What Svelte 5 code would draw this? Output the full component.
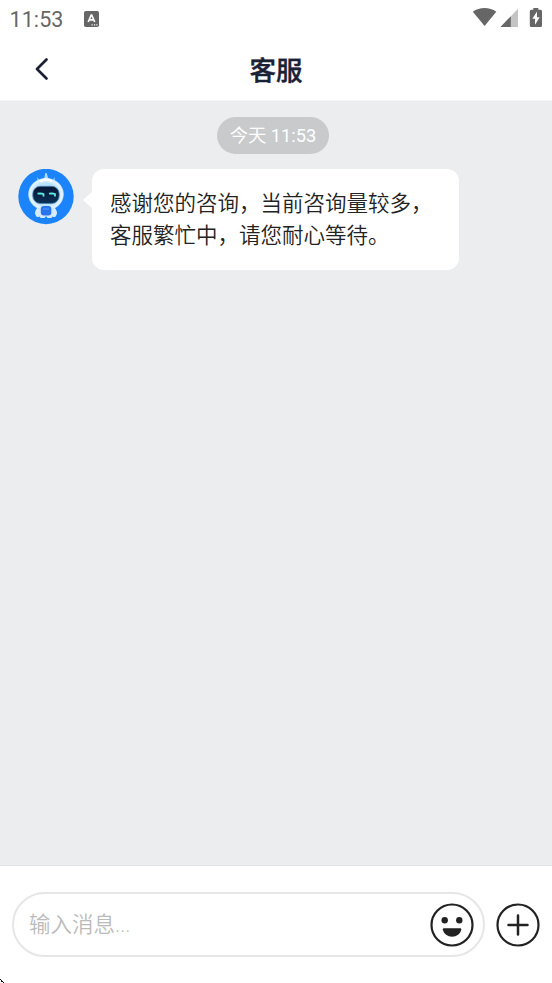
<script>
  const title = '客服';
  const time = '11:53';
  const lines = ['感谢您的咨询，当前咨询量较多，', '客服繁忙中，请您耐心等待。'];
  let draft = $state('');
</script>

<div class="screen">
  <div class="status">
    <span class="clock">{time}</span>
    <svg class="app" width="15" height="16" viewBox="0 0 15 16">
      <rect width="15" height="16" rx="1.8" fill="#666" />
      <path d="M4.2 11 7.2 4h.5l3 7M5.4 8.8h4.1" fill="none" stroke="#fff" stroke-width="1.7" />
      <path d="M7.5 13.8h1.2M10 13.8h1.2M12.3 13.8h1.2" stroke="#fff" stroke-width="1.2" />
    </svg>
    <svg class="signals" width="72" height="22" viewBox="0 0 72 22">
      <path d="M.8 4.7C7.4-.2 17.700-.2 24.300 4.700L12.600 19Z" fill="#666" />
      <path d="M46 1.800V20H28.500Z" fill="#c4c4c4" />
      <path d="M38.800 9.200V20H28.500Z" fill="#666" />
      <path d="M61.300 1h5v1.700h2.200q1.500 0 1.500 1.500v14.300q0 1.500-1.500 1.500h-9.200q-1.500 0-1.500-1.500V4.200q0-1.500 1.500-1.500h2Z" fill="#666" />
      <path d="M65 4.500 60.300 11.800h2.700v6L67.700 10.200H65Z" fill="#fff" />
    </svg>
  </div>

  <header>
    <button class="back" aria-label="返回">
      <svg width="16" height="24" viewBox="0 0 16 24">
        <path d="M12.500 2.500 3 12l9.500 9.500" fill="none" stroke="#1b2134" stroke-width="2.700" stroke-linecap="round" stroke-linejoin="round" />
      </svg>
    </button>
    <h1>{title}</h1>
  </header>

  <main>
    <div class="date">今天 {time}</div>
    <div class="message">
      <svg class="avatar" width="56" height="56" viewBox="0 0 56 56">
        <defs>
          <radialGradient id="shell" cx=".5" cy=".5" r=".52">
            <stop offset=".65" stop-color="#b9e2fb" />
            <stop offset=".88" stop-color="#e8f6ff" />
            <stop offset="1" stop-color="#8bc7ff" />
          </radialGradient>
          <linearGradient id="visor" x1="0" y1="0" x2="0" y2="1">
            <stop offset="0" stop-color="#071633" />
            <stop offset="1" stop-color="#0b3158" />
          </linearGradient>
        </defs>
        <circle cx="28" cy="27.500" r="27.700" fill="#1c84fb" />
        <path d="M27.400 4h1.300l2.500 9h-6ZM19.200 8l2.500 4-2 1.500ZM36.800 8l-2.500 4 2 1.500Z" fill="#a9daff" />
        <ellipse cx="28" cy="25.200" rx="17.800" ry="16.200" fill="url(#shell)" />
        <path d="M22 12.500q6-4 12 0" fill="none" stroke="#fff" stroke-width="2.500" />
        <rect x="14.800" y="17.300" width="26.400" height="17.200" rx="7.500" fill="url(#visor)" stroke="#4d87b7" stroke-width=".8" />
        <path d="M19.500 24.700q4-.5 6 .3v2.500M31 24.700q4-.5 6 .3v2.500" fill="none" stroke="#5feae3" stroke-width="1.800" />
        <path d="M20 38q-5 5-1.700 9.500 3.500 1.500 5-1.500M36 38q5 5 1.700 9.500-3.500 1.500-5-1.500" fill="#d8ecff" />
        <path d="M22 37h12l2 6-2.500 6h-4l-1.500-2-1.500 2h-4L20 43Z" fill="#d3e9ff" />
        <rect x="22.800" y="37" width="10.500" height="9.500" rx="3" fill="#2874ee" />
        <path d="M25 40h6" stroke="#3f8cf7" stroke-width="1.500" />
      </svg>
      <div class="bubble">
        {#each lines as line}
          <div>{line}</div>
        {/each}
      </div>
    </div>
  </main>

  <footer>
    <div class="field">
      <input bind:value={draft} placeholder="输入消息..." />
      <button aria-label="表情">
        <svg width="44" height="44" viewBox="0 0 44 44">
          <circle cx="22" cy="22" r="20.500" fill="none" stroke="#222" stroke-width="2.200" />
          <circle cx="14.700" cy="17.200" r="3.200" fill="#222" />
          <circle cx="29.300" cy="17.200" r="3.200" fill="#222" />
          <path d="M14 25.300H30.200Q31.500 25.300 31.300 26.500C30.500 30.800 26.500 33.700 22.100 33.700S13.700 30.800 12.800 26.500Q12.700 25.300 14 25.300Z" fill="#222" />
        </svg>
      </button>
    </div>
    <button aria-label="更多">
      <svg width="44" height="44" viewBox="0 0 44 44">
        <circle cx="22" cy="22" r="20.500" fill="none" stroke="#222" stroke-width="2.200" />
        <path d="M12.500 22h19M22 12.500v19" stroke="#222" stroke-width="2.500" stroke-linecap="round" />
      </svg>
    </button>
    <svg class="corner" width="4" height="4" viewBox="0 0 4 4" shape-rendering="crispEdges">
      <path d="M0 0h1v1H0ZM1 1h1v1H1ZM2 2h1v1H2ZM1 2h1v1H1ZM3 3h1v1H3Z" fill="#111" />
    </svg>
  </footer>
</div>

<style>
  .screen {
    box-sizing: border-box;
    width: 552px;
    height: 983px;
    display: flex;
    flex-direction: column;
    background: #fff;
    font-family: Roboto, 'Noto Sans CJK SC', sans-serif;
    overflow: hidden;
  }
  svg { display: block; flex: none; }
  button { padding: 0; border: 0; background: none; flex: none; }
  .status {
    height: 38px;
    flex: none;
    display: flex;
    align-items: center;
    padding: 0 8px 0 9.500px;
    color: #666;
  }
  .clock { width: 74.500px; font-size: 21.500px; letter-spacing: .1px; line-height: 36px; padding-top: 2px; }
  .signals { margin: 0 0 2px auto; }
  header {
    height: 62px;
    flex: none;
    display: grid;
    grid-template-columns: 80px 1fr 80px;
    align-items: center;
  }
  .back { margin-left: 33.500px; width: 16px; }
  h1 {
    margin: 4px 0 0;
    text-align: center;
    font-size: 26.500px;
    line-height: 40px;
    font-weight: 500;
    -webkit-text-stroke: .4px #1b2134;
    color: #1b2134;
  }
  main {
    flex: 1;
    display: flex;
    flex-direction: column;
    background: #ecedef;
    border-top: 1px solid #f3f4f5;
    box-sizing: border-box;
  }
  .date {
    margin: 16px 0 0 217px;
    width: 112px;
    height: 36.500px;
    border-radius: 19px;
    background: #c9cacc;
    color: #fff;
    font-size: 18.300px;
    line-height: 37px;
    text-align: center;
    white-space: nowrap;
  }
  .message { display: flex; margin: 15.500px 0 0 18px; }
  .bubble {
    position: relative;
    box-sizing: border-box;
    width: 366.500px;
    height: 101px;
    margin-left: 18px;
    padding: 19px 0 0 18px;
    border-radius: 12px;
    background: #fff;
    color: #222;
    font-size: 21.500px;
    font-weight: 350;
    line-height: 32px;
    white-space: nowrap;
  }
  .bubble::before {
    content: '';
    position: absolute;
    left: -9px;
    top: 22px;
    border: solid transparent;
    border-width: 9px 10px 9px 0;
    border-right-color: #fff;
  }
  footer {
    position: relative;
    height: 118px;
    flex: none;
    box-sizing: border-box;
    display: flex;
    align-items: center;
    gap: 11px;
    padding: 0 12px;
    border-top: 1px solid #e0e0e1;
  }
  .field {
    width: 473px;
    height: 65px;
    box-sizing: border-box;
    display: flex;
    align-items: center;
    padding: 0 9px 0 15px;
    border: 2px solid #e6e6e6;
    border-radius: 33px;
  }
  input {
    flex: 1;
    min-width: 0;
    height: 40px;
    padding: 0;
    border: 0;
    outline: 0;
    background: none;
    font: 350 21.500px/40px Roboto, 'Noto Sans CJK SC', sans-serif;
    color: #222;
  }
  input::placeholder { color: #bbb; opacity: 1; }
  .corner { position: absolute; left: 0; bottom: 0; }
</style>
